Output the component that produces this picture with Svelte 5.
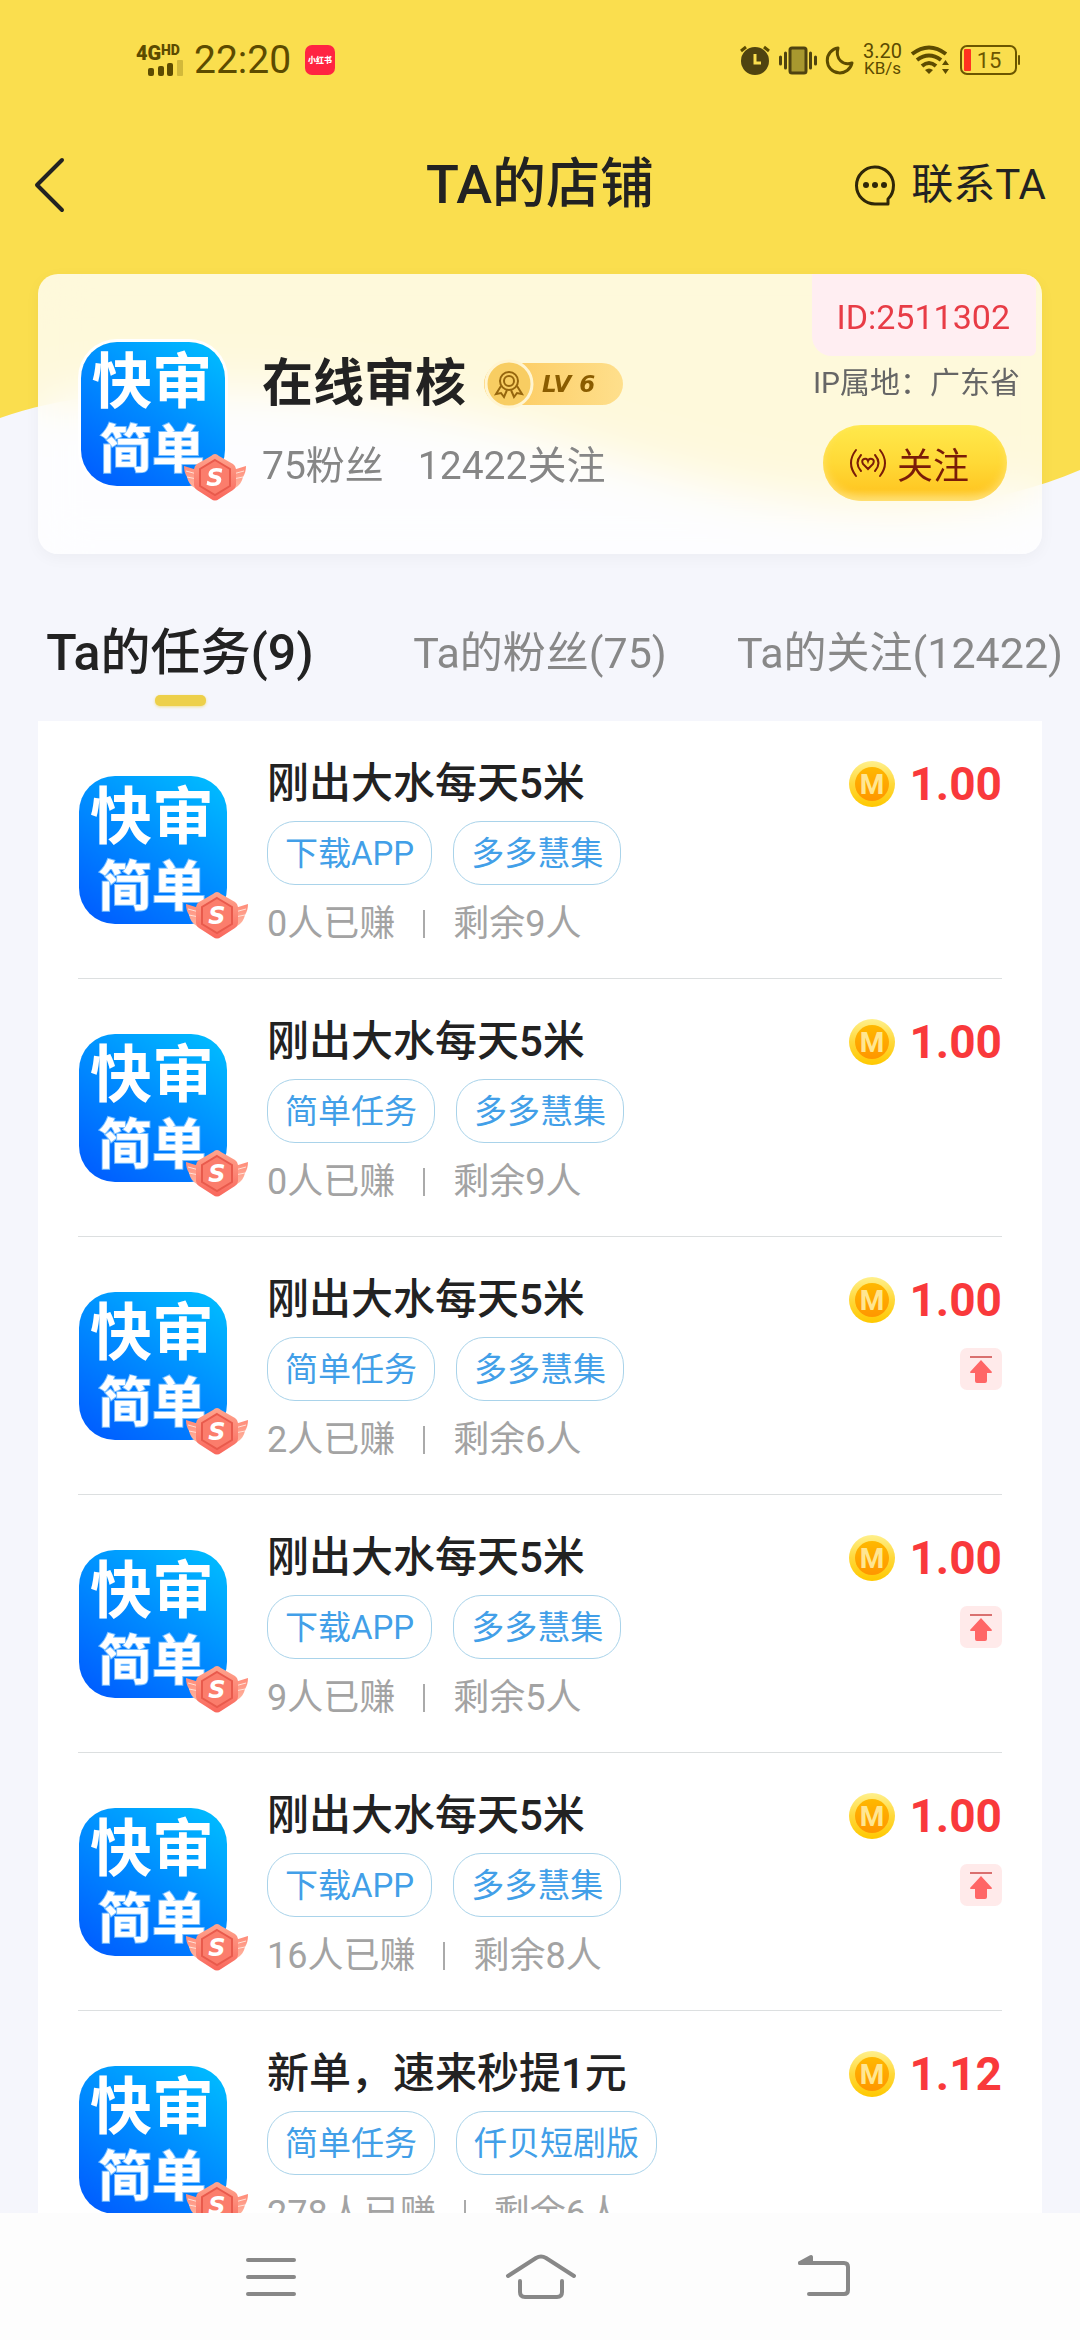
<script>
  let activeTab = 'tasks';
  let followed  = false;

  const tabs = [
    { id: 'tasks',   label: 'Ta的任务(9)' },
    { id: 'fans',    label: 'Ta的粉丝(75)' },
    { id: 'follows', label: 'Ta的关注(12422)' },
  ];

  const tasks = [
    { title: '刚出大水每天5米',     tags: ['下载APP', '多多慧集'],    earned: 0,   left: 9, price: '1.00', top: false },
    { title: '刚出大水每天5米',     tags: ['简单任务', '多多慧集'],   earned: 0,   left: 9, price: '1.00', top: false },
    { title: '刚出大水每天5米',     tags: ['简单任务', '多多慧集'],   earned: 2,   left: 6, price: '1.00', top: true },
    { title: '刚出大水每天5米',     tags: ['下载APP', '多多慧集'],    earned: 9,   left: 5, price: '1.00', top: true },
    { title: '刚出大水每天5米',     tags: ['下载APP', '多多慧集'],    earned: 16,  left: 8, price: '1.00', top: true },
    { title: '新单，速来秒提1元',   tags: ['简单任务', '仟贝短剧版'], earned: 278, left: 6, price: '1.12', top: false },
  ];
</script>

{#snippet shopLogo()}
  <div class="logo">
    <svg class="logo-img" viewBox="0 0 148 148" role="img" aria-label="快审简单">
      <text x="73" y="63" font-size="62" text-anchor="middle">快审</text>
      <text class="halo" x="73" y="130" font-size="54" text-anchor="middle">简单</text>
    </svg>
    <svg class="logo-badge" viewBox="0 0 64 48" aria-hidden="true">
      <path d="M1 13 L14 17 L14 36 C7 33 5 28 4 24 C2 21 1 17 1 13Z" fill="url(#wing)" />
      <path d="M63 13 L50 17 L50 36 C57 33 59 28 60 24 C62 21 63 17 63 13Z" fill="url(#wing)" />
      <path d="M3 18 L14 21 M4 24 L14 26 M61 18 L50 21 M60 24 L50 26" stroke="#ffe0d6" stroke-width="1" />
      <path d="M32 1 Q34 1 36 3 L50 11 Q53 13 53 16 V32 Q53 35 50 37 L36 46 Q32 49 28 46 L14 37 Q11 35 11 32 V16 Q11 13 14 11 L28 3 Q30 1 32 1Z" fill="url(#hex)" />
      <path d="M32 7 L47 16 V33 L32 42 L17 33 V16Z" fill="#fb7d6c" stroke="#e95a4c" stroke-width="2" />
      <text x="32" y="33" font-size="24" text-anchor="middle">S</text>
    </svg>
  </div>
{/snippet}

<svg class="defs" width="0" height="0" aria-hidden="true">
  <defs>
    <linearGradient id="wing" x1="0" y1="0" x2="0" y2="1">
      <stop offset="0" stop-color="#ff8b78" />
      <stop offset="1" stop-color="#ffb7a2" />
    </linearGradient>
    <linearGradient id="hex" x1="0" y1="0" x2="0" y2="1">
      <stop offset="0" stop-color="#ffa58e" />
      <stop offset="1" stop-color="#f9675c" />
    </linearGradient>
    <linearGradient id="coin" x1="0" y1="0" x2="0" y2="1">
      <stop offset="0" stop-color="#fff08c" />
      <stop offset="0.5" stop-color="#ffd83a" />
      <stop offset="1" stop-color="#ffc800" />
    </linearGradient>
    <linearGradient id="coinInner" x1="0" y1="0" x2="0" y2="1">
      <stop offset="0" stop-color="#ffb800" />
      <stop offset="1" stop-color="#ff9600" />
    </linearGradient>
  </defs>
</svg>

<div class="page">
  <svg class="backdrop" viewBox="0 0 1080 540" preserveAspectRatio="none" aria-hidden="true">
    <path d="M0 0H1080V470C900 546 720 490 560 440S150 366 0 418Z" fill="#fade4e" />
  </svg>

  <div class="status">
    <svg class="signal" viewBox="0 0 48 34" role="img" aria-label="4G HD">
      <text x="0" y="17" font-size="20">4G</text>
      <text x="25" y="12" font-size="14">HD</text>
      <rect x="12" y="25" width="6" height="8" rx="2" />
      <rect x="22" y="23" width="6" height="10" rx="2" />
      <rect x="31" y="20" width="6" height="13" rx="2" />
      <rect x="41" y="17" width="6" height="16" rx="1" opacity="0.25" />
    </svg>
    <span class="clock">22:20</span>
    <svg class="red-app" viewBox="0 0 30 30" role="img" aria-label="小红书">
      <rect width="30" height="30" rx="7" fill="#ff2442" />
      <text x="15" y="18" font-size="8" text-anchor="middle">小红书</text>
    </svg>

    <div class="status-right">
      <svg width="30" height="30" viewBox="0 0 30 30" aria-hidden="true">
        <circle cx="15" cy="16" r="14" fill="#4f4310" />
        <path d="M1 6 L6 2 M29 6 L24 2" stroke="#5c4b00" stroke-width="3" />
        <path d="M15 9V18H21" fill="none" stroke="#fade4e" stroke-width="3" />
      </svg>
      <svg width="38" height="30" viewBox="0 0 38 30" aria-hidden="true">
        <rect x="11" y="3" width="16" height="25" rx="2" fill="#a8982f" stroke="#4f4310" stroke-width="3" />
        <path d="M6.500 8V23M31.500 8V23" stroke="#4f4310" stroke-width="3" stroke-linecap="round" />
        <path d="M1.500 12V19M36.500 12V19" stroke="#4f4310" stroke-width="3" stroke-linecap="round" />
      </svg>
      <svg width="28" height="30" viewBox="0 0 28 30" aria-hidden="true">
        <path d="M12 3A12.500 12.500 0 1 0 26 18C17 21 9 14 12 3Z" fill="none" stroke="#5c4b00" stroke-width="3" stroke-linejoin="round" />
      </svg>
      <span class="speed">3.20<small>KB/s</small></span>
      <svg width="40" height="30" viewBox="0 0 40 30" aria-hidden="true">
        <path d="M1 9Q18 -4 35 9" fill="none" stroke="#5c4b00" stroke-width="4" />
        <path d="M6 15Q18 6 30 15" fill="none" stroke="#5c4b00" stroke-width="4" />
        <path d="M11 21Q18 15 25 21" fill="none" stroke="#5c4b00" stroke-width="4" />
        <path d="M14 25Q18 22 22 25L18 29Z" fill="#5c4b00" />
        <path d="M31 20L34.500 15L38 20ZM31 24H38L34.500 29Z" fill="#5c4b00" />
      </svg>
      <svg class="battery" width="60" height="30" viewBox="0 0 60 30" role="img" aria-label="15%">
        <rect x="1" y="1" width="55" height="28" rx="6" fill="none" stroke="#6b5600" stroke-width="2" />
        <rect x="4" y="4" width="7" height="22" rx="1" fill="#ff3320" />
        <rect x="58" y="10" width="2" height="10" rx="1" fill="#6b5600" />
        <text x="29" y="23" font-size="22" text-anchor="middle">15</text>
      </svg>
    </div>
  </div>

  <header class="navbar">
    <button class="back" aria-label="返回">
      <svg width="32" height="56" viewBox="0 0 32 56" aria-hidden="true">
        <path d="M28 3L3 28L28 53" fill="none" stroke="#222" stroke-width="4" stroke-linecap="round" stroke-linejoin="round" />
      </svg>
    </button>
    <h1>TA的店铺</h1>
    <button class="contact">
      <svg width="40" height="42" viewBox="0 0 40 42" aria-hidden="true">
        <path d="M20 40A18.500 18.500 0 1 1 38.500 21Q38.500 30 33 35V40Z" fill="none" stroke="#2e2608" stroke-width="3" stroke-linejoin="round" />
        <circle cx="11" cy="21" r="3" fill="#2e2608" />
        <circle cx="20" cy="21" r="3" fill="#2e2608" />
        <circle cx="29" cy="21" r="3" fill="#2e2608" />
      </svg>
      联系TA
    </button>
  </header>

  <section class="card">
    <div class="avatar">{@render shopLogo()}</div>

    <div class="who">
      <div class="name-row">
        <h2>在线审核</h2>
        <span class="level">
          <svg class="medal" viewBox="0 0 50 50" aria-hidden="true">
            <circle cx="25" cy="25" r="23" fill="#f8cd62" stroke="#fff5d2" stroke-width="3" />
            <g fill="none" stroke="#96660e" stroke-width="2">
              <circle cx="25" cy="22" r="9" />
              <circle cx="25" cy="22" r="5" />
              <path d="M17 27L12 35L17 34L20 38L23 31M33 27L38 35L33 34L30 38L27 31" />
            </g>
          </svg>
          LV 6
        </span>
      </div>
      <div class="counts">
        <span>75粉丝</span>
        <span>12422关注</span>
      </div>
    </div>

    <div class="side">
      <span class="shop-id">ID:2511302</span>
      <span class="region">IP属地：广东省</span>
      <button class="follow" aria-pressed={followed} on:click={() => (followed = !followed)}>
        <svg width="38" height="28" viewBox="0 0 38 28" aria-hidden="true">
          <g fill="none" stroke="#7a1c08" stroke-width="2" stroke-linecap="round">
            <path d="M7 1Q-3 14 7 27M12 6Q5 14 12 22M31 1Q41 14 31 27M26 6Q33 14 26 22" />
            <path d="M19 20L14 15Q12 11 15 10Q18 9 19 12Q20 9 23 10Q26 11 24 15Z" />
          </g>
        </svg>
        关注
      </button>
    </div>
  </section>

  <nav class="tabs">
    {#each tabs as tab}
      <button class="tab" class:active={activeTab === tab.id} on:click={() => (activeTab = tab.id)}>
        {tab.label}
      </button>
    {/each}
  </nav>

  <ul class="list">
    {#each tasks as task}
      <li class="task">
        <div class="thumb">{@render shopLogo()}</div>

        <div class="info">
          <h3>{task.title}</h3>
          <div class="tags">
            {#each task.tags as tag}
              <span class="tag">{tag}</span>
            {/each}
          </div>
          <div class="stats">
            <span>{task.earned}人已赚</span>
            <i class="bar"></i>
            <span>剩余{task.left}人</span>
          </div>
        </div>

        <div class="reward">
          <div class="price">
            <svg width="46" height="46" viewBox="0 0 46 46" aria-hidden="true">
              <circle cx="23" cy="23" r="23" fill="url(#coin)" />
              <circle cx="23" cy="23" r="17" fill="url(#coinInner)" />
              <text x="23" y="33" font-size="28" text-anchor="middle">M</text>
            </svg>
            {task.price}
          </div>
          {#if task.top}
            <svg class="pin" viewBox="0 0 42 42" role="img" aria-label="置顶">
              <rect width="42" height="42" rx="7" fill="#ffeaea" />
              <rect x="10" y="8" width="22" height="2" fill="#d9706f" />
              <path d="M21 12L32 24Q32 25 31 25H27V33Q27 35 25 35H17Q15 35 15 33V25H11Q10 25 10 24Z" fill="#ff6666" />
            </svg>
          {/if}
        </div>
      </li>
    {/each}
  </ul>

  <footer class="sysbar">
    <button aria-label="菜单">
      <svg width="80" height="44" viewBox="0 0 80 44" aria-hidden="true">
        <path d="M18 5H64M18 22H64M18 39H64" />
      </svg>
    </button>
    <button aria-label="主页">
      <svg width="80" height="44" viewBox="0 0 80 44" aria-hidden="true">
        <path d="M8 21L36 3Q41 0 46 3L74 21M20 26V37Q20 42 25 42H57Q62 42 62 37V26" />
      </svg>
    </button>
    <button aria-label="后退">
      <svg width="80" height="44" viewBox="0 0 80 44" aria-hidden="true">
        <path d="M30 8H74Q78 8 78 12V35Q78 39 74 39H39" />
        <path class="arrow" d="M30 8L41 2V8Z" />
      </svg>
    </button>
  </footer>
</div>

<style>
  :global(body) {
    margin: 0;
    background: #f5f6fc;
  }

  .page {
    position: relative;
    display: flex;
    flex-direction: column;
    height: 100vh;
    overflow: hidden;
    background: #f5f6fc;
    color: #222;
    font-family: Roboto, 'Noto Sans CJK SC', sans-serif;
  }

  .page > * {
    position: relative;
    flex: none;
  }

  .page > .backdrop {
    position: absolute;
    top: 0;
    left: 0;
    width: 100%;
    height: 540px;
  }

  .defs {
    position: absolute;
  }

  svg {
    display: block;
    flex: none;
    overflow: visible;
  }

  h1, h2, h3, ul {
    margin: 0;
    padding: 0;
  }

  button {
    padding: 0;
    border: none;
    background: none;
    color: inherit;
    font-family: inherit;
    cursor: pointer;
  }

  /* status bar */
  .status {
    display: flex;
    align-items: center;
    height: 120px;
    padding: 0 60px 0 136px;
    color: #5c4b00;
  }

  .signal {
    width: 48px;
    height: 34px;
    fill: #5c4b00;
    font-weight: 900;
  }

  .clock {
    margin: 0 14px 0 10px;
    font-size: 39px;
    line-height: 40px;
  }

  .red-app {
    width: 30px;
    height: 30px;
  }

  .red-app text {
    fill: #fff;
    font-weight: 900;
  }

  .status-right {
    display: flex;
    align-items: center;
    gap: 9px;
    margin-left: auto;
  }

  .speed {
    display: flex;
    flex-direction: column;
    align-items: center;
    font-size: 20px;
    line-height: 17px;
  }

  .speed small {
    font-size: 17px;
  }

  .battery text {
    fill: #6b5600;
  }

  /* title bar */
  .navbar {
    display: grid;
    grid-template-columns: 1fr auto 1fr;
    align-items: center;
    height: 130px;
    padding: 0 34px;
  }

  .back {
    justify-self: start;
  }

  h1 {
    font-size: 54px;
    font-weight: 500;
    line-height: 64px;
  }

  .contact {
    display: flex;
    align-items: center;
    justify-self: end;
    gap: 16px;
    font-size: 42px;
    line-height: 52px;
  }

  /* shop card */
  .card {
    display: flex;
    height: 280px;
    margin: 24px 38px 0;
    border-radius: 20px;
    background: rgba(255, 255, 255, 0.8);
    backdrop-filter: blur(24px);
    box-shadow: 0 4px 16px rgba(0, 0, 0, 0.04);
    overflow: hidden;
  }

  .avatar {
    align-self: center;
    width: 144px;
    margin-left: 43px;
  }

  .avatar .logo-img {
    box-shadow: 0 0 0 3px #fff;
  }

  .logo {
    position: relative;
  }

  .logo-img {
    width: 100%;
    border-radius: 36px;
    background: linear-gradient(215deg, #00c0ff 0%, #0090ff 45%, #0058ff 100%);
  }

  .logo-img text {
    fill: #fff;
    font-family: 'Noto Sans CJK SC', sans-serif;
    font-weight: 700;
  }

  .logo-img .halo {
    paint-order: stroke;
    stroke: #7cc0ff;
    stroke-width: 2px;
  }

  .logo-badge {
    position: absolute;
    right: -22px;
    bottom: -15px;
    width: 64px;
    height: 48px;
  }

  .logo-badge text {
    fill: #fff;
    font-family: 'DejaVu Sans', sans-serif;
    font-weight: 700;
    font-style: italic;
  }

  .who {
    flex: 1;
    padding: 80px 0 0 37px;
  }

  .name-row {
    display: flex;
    align-items: center;
    gap: 18px;
  }

  h2 {
    font-size: 51px;
    font-weight: 600;
    line-height: 60px;
  }

  .level {
    display: flex;
    align-items: center;
    gap: 8px;
    height: 42px;
    padding-right: 28px;
    border-radius: 21px;
    background: linear-gradient(90deg, #fcc85a, #fedf8c);
    color: #8a5c00;
    font-family: 'DejaVu Sans', sans-serif;
    font-size: 23px;
    font-weight: 700;
    font-style: italic;
    white-space: nowrap;
  }

  .medal {
    width: 50px;
    height: 50px;
  }

  .counts {
    display: flex;
    gap: 34px;
    margin-top: 26px;
    color: #868686;
    font-size: 39px;
    line-height: 52px;
  }

  .side {
    display: flex;
    flex-direction: column;
    align-items: flex-end;
  }

  .shop-id {
    margin-right: 6px;
    padding: 5px 26px 0 24px;
    border-radius: 0 0 6px 20px;
    background: #ffeef2;
    color: #e83c46;
    font-size: 34px;
    line-height: 77px;
  }

  .region {
    margin: 7px 22px 0 0;
    color: #666;
    font-size: 30px;
    line-height: 40px;
  }

  .follow {
    display: flex;
    align-items: center;
    gap: 10px;
    height: 76px;
    margin: 22px 35px 0 0;
    padding: 0 38px 0 26px;
    border-radius: 38px;
    background: linear-gradient(180deg, #ffe94c 0%, #ffd936 50%, #ffc824 85%, #ffd350 100%);
    box-shadow: inset 0 -4px 8px rgba(255, 235, 150, 0.6);
    color: #7a1c08;
    font-size: 36px;
  }

  /* tabs */
  .tabs {
    display: grid;
    grid-template-columns: repeat(3, 1fr);
  }

  .tab {
    display: flex;
    flex-direction: column;
    align-items: center;
    padding: 67px 0 15px;
    color: #888;
    font-size: 43px;
    line-height: 64px;
    white-space: nowrap;
  }

  .tab::after {
    content: '';
    width: 51px;
    height: 11px;
    margin-top: 10px;
    border-radius: 5px;
  }

  .tab.active {
    color: #222;
    font-size: 50px;
    font-weight: 500;
  }

  .tab.active::after {
    background: #edd04a;
    box-shadow: 0 1px 3px rgba(237, 208, 74, 0.6);
  }

  /* tasks */
  .page > .list {
    flex: 1;
    min-height: 0;
    margin: 0 38px;
    padding: 0 40px;
    overflow-y: auto;
    scrollbar-width: none;
    background: #fff;
    list-style: none;
  }

  .task {
    display: flex;
    align-items: center;
    padding: 33px 0 28px;
    border-bottom: 1px solid #dcdfe0;
  }

  .thumb {
    width: 148px;
    margin: 0 40px 4px 1px;
  }

  .info {
    flex: 1;
  }

  h3 {
    font-size: 42px;
    font-weight: 500;
    line-height: 60px;
  }

  .tags {
    display: flex;
    gap: 21px;
    margin-top: 7px;
  }

  .tag {
    padding: 1px 17px 0;
    border: 1px solid #a9d3ea;
    border-radius: 28px;
    color: #429fe8;
    font-size: 33px;
    line-height: 61px;
  }

  .stats {
    display: flex;
    align-items: center;
    gap: 28px;
    margin-top: 13px;
    color: #a3a3a3;
    font-size: 36px;
    line-height: 52px;
  }

  .bar {
    width: 2px;
    height: 28px;
    background: #aaa;
  }

  .reward {
    display: flex;
    flex-direction: column;
    align-items: flex-end;
    align-self: flex-start;
    gap: 18px;
  }

  .price {
    display: flex;
    align-items: center;
    gap: 14px;
    color: #f9393b;
    font-size: 46px;
    font-weight: 700;
    line-height: 60px;
  }

  .price text {
    fill: #ffe691;
  }

  .pin {
    width: 42px;
    height: 42px;
  }

  /* system keys */
  .sysbar {
    display: grid;
    grid-template-columns: repeat(3, 1fr);
    height: 127px;
    padding: 0 12.5%;
    background: #fdfdfd;
  }

  .sysbar button {
    display: flex;
    align-items: center;
    justify-content: center;
  }

  .sysbar path {
    fill: none;
    stroke: #888;
    stroke-width: 4px;
    stroke-linecap: round;
    stroke-linejoin: round;
  }

  .sysbar .arrow {
    fill: #888;
  }
</style>
